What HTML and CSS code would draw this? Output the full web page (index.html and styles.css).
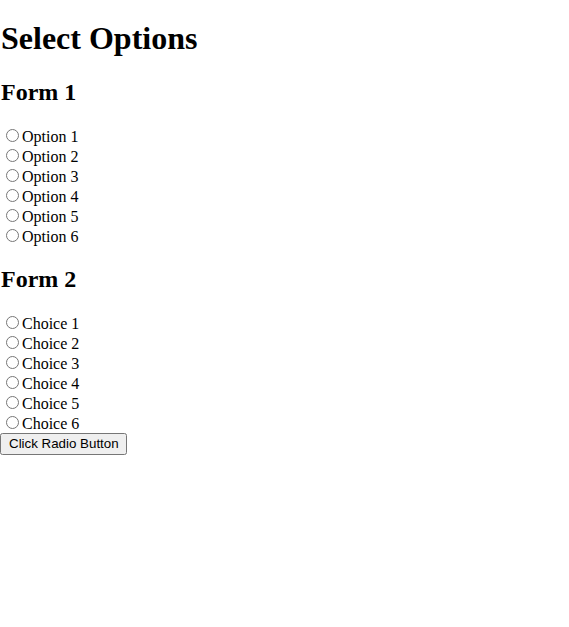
FILE: index.html
```html
<!DOCTYPE html>
<html>
<head>
<meta charset="utf-8">
<title>Select Options</title>
<link rel="stylesheet" href="styles.css">
</head>
<body class="page">
<h1 class="title">Select Options</h1>
<h2 class="form-title">Form 1</h2>
<form class="radio-form">
  <div class="row"><input class="radio" type="radio" name="f1" id="o1"><label for="o1">Option 1</label></div>
  <div class="row"><input class="radio" type="radio" name="f1" id="o2"><label for="o2">Option 2</label></div>
  <div class="row"><input class="radio" type="radio" name="f1" id="o3"><label for="o3">Option 3</label></div>
  <div class="row"><input class="radio" type="radio" name="f1" id="o4"><label for="o4">Option 4</label></div>
  <div class="row"><input class="radio" type="radio" name="f1" id="o5"><label for="o5">Option 5</label></div>
  <div class="row"><input class="radio" type="radio" name="f1" id="o6"><label for="o6">Option 6</label></div>
</form>
<h2 class="form-title">Form 2</h2>
<form class="radio-form">
  <div class="row"><input class="radio" type="radio" name="f2" id="c1"><label for="c1">Choice 1</label></div>
  <div class="row"><input class="radio" type="radio" name="f2" id="c2"><label for="c2">Choice 2</label></div>
  <div class="row"><input class="radio" type="radio" name="f2" id="c3"><label for="c3">Choice 3</label></div>
  <div class="row"><input class="radio" type="radio" name="f2" id="c4"><label for="c4">Choice 4</label></div>
  <div class="row"><input class="radio" type="radio" name="f2" id="c5"><label for="c5">Choice 5</label></div>
  <div class="row"><input class="radio" type="radio" name="f2" id="c6"><label for="c6">Choice 6</label></div>
</form>
<button class="action" type="button">Click Radio Button</button>
</body>
</html>
```
FILE: styles.css
```css
.page {
  margin: 0;
  font-family: "Liberation Serif", "Times New Roman", serif;
  font-size: 16px;
  color: #000;
  background: #fff;
}
.title {
  font-size: 32px;
  margin: 20.44px 0 21.44px;
  padding-left: 1px;
}
.form-title {
  font-size: 24px;
  margin: 19.92px 0;
  padding-left: 1px;
}
.radio-form {
  margin: 0;
}
.radio {
  margin: 3px 3px 0 6px;
}
.action {
  font-family: "Liberation Sans", Arial, sans-serif;
  font-size: 13.33px;
  padding: 1px 6px 2px 7px;
}
```
